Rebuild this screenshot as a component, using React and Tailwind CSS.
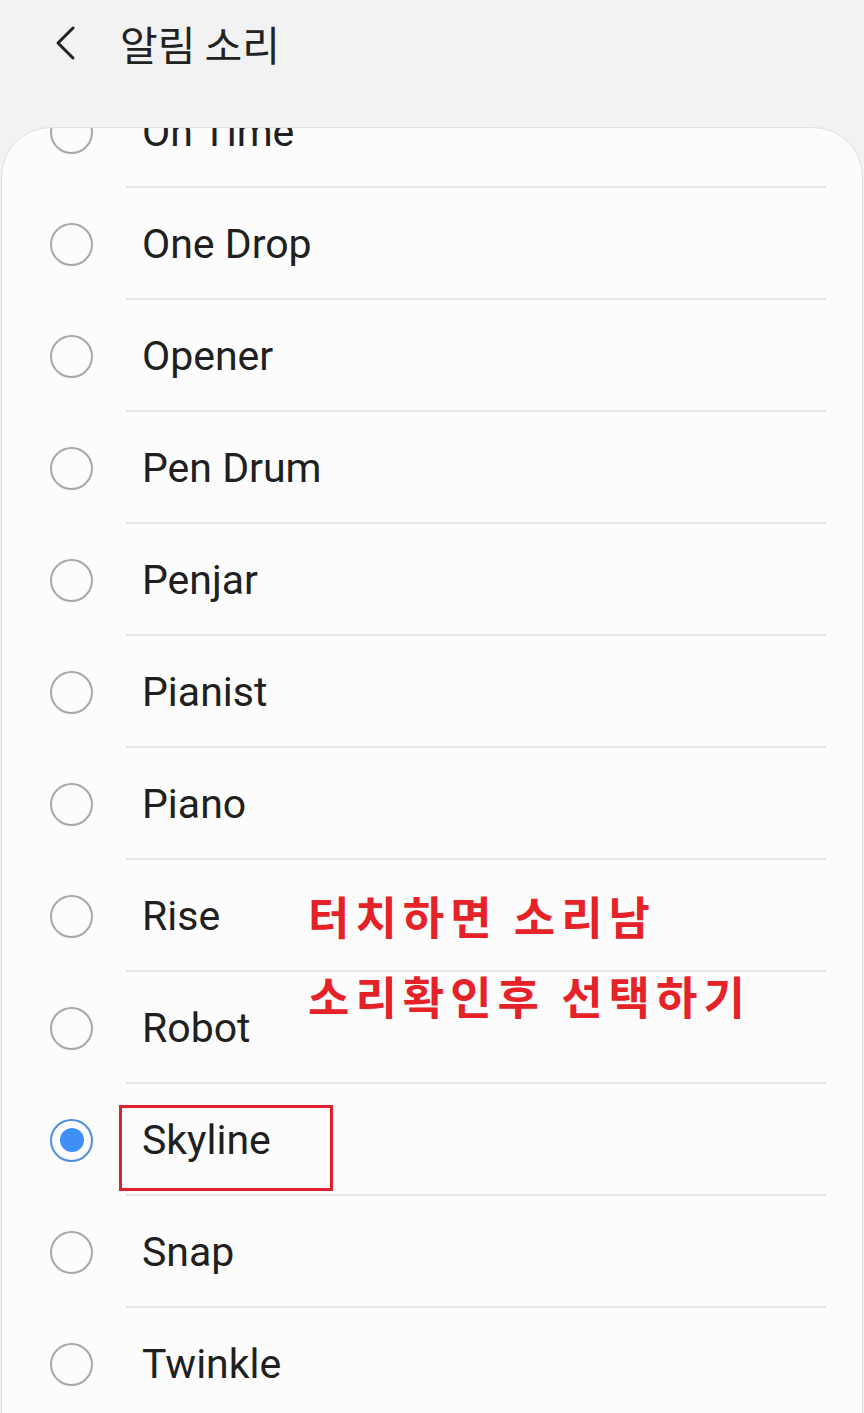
import React from "react";

const items = [
  "On Time",
  "One Drop",
  "Opener",
  "Pen Drum",
  "Penjar",
  "Pianist",
  "Piano",
  "Rise",
  "Robot",
  "Skyline",
  "Snap",
  "Twinkle",
];

function Radio({ checked }) {
  if (checked) {
    return (
      <div className="w-[43px] h-[43px] rounded-full border-[2px] border-[#4f8fdc] flex items-center justify-center">
        <div className="w-[24px] h-[24px] rounded-full bg-[#3f8ff7]" />
      </div>
    );
  }
  return <div className="w-[43px] h-[43px] rounded-full border-[2px] border-[#a8a8a8]" />;
}

export default function App() {
  return (
    <div className="relative h-[1413px] w-[864px] overflow-hidden bg-[#f2f2f2]" style={{ fontFamily: "Roboto, 'Noto Sans CJK KR', sans-serif" }}>
      <div className="h-[127px] flex items-start pt-[16px]">
        <div className="w-[120px] h-[54px] flex items-center justify-center pl-[12px]">
          <svg width="28" height="36" viewBox="0 0 28 36" fill="none">
            <path d="M21 3 L6 18 L21 33" stroke="#222" strokeWidth="3" strokeLinecap="round" strokeLinejoin="round" />
          </svg>
        </div>
        <div className="text-[41px] leading-[54px] text-[#222]" style={{ fontFamily: "'Noto Sans CJK KR', sans-serif" }}>알림 소리</div>
      </div>
      <div className="mx-[1px] h-[1400px] rounded-t-[50px] border border-[#e0e0e0] bg-[#fcfcfc] overflow-hidden">
        <div className="-mt-[52px]">
          {items.map((name) => (
            <div key={name} className="flex h-[112px]">
              <div className="w-[124px] flex items-center pl-[48px]">
                <Radio checked={name === "Skyline"} />
              </div>
              <div className="flex-1 mr-[36px] border-b-2 border-[#e4e4e4] flex items-center pl-[16px] pt-[4px] text-[41px] text-[#202020]">
                {name}
              </div>
            </div>
          ))}
        </div>
      </div>
      <div className="absolute left-[119px] top-[1105px] w-[214px] h-[86px] border-[3px] border-[#e0212b]" />
      <div className="absolute left-[308px] top-[876px] text-[45px] leading-[80px] tracking-[6px] font-bold text-[#e52228]" style={{ fontFamily: "'Noto Sans CJK KR', sans-serif" }}>
        <div>터치하면 소리남</div>
        <div>소리확인후 선택하기</div>
      </div>
    </div>
  );
}
